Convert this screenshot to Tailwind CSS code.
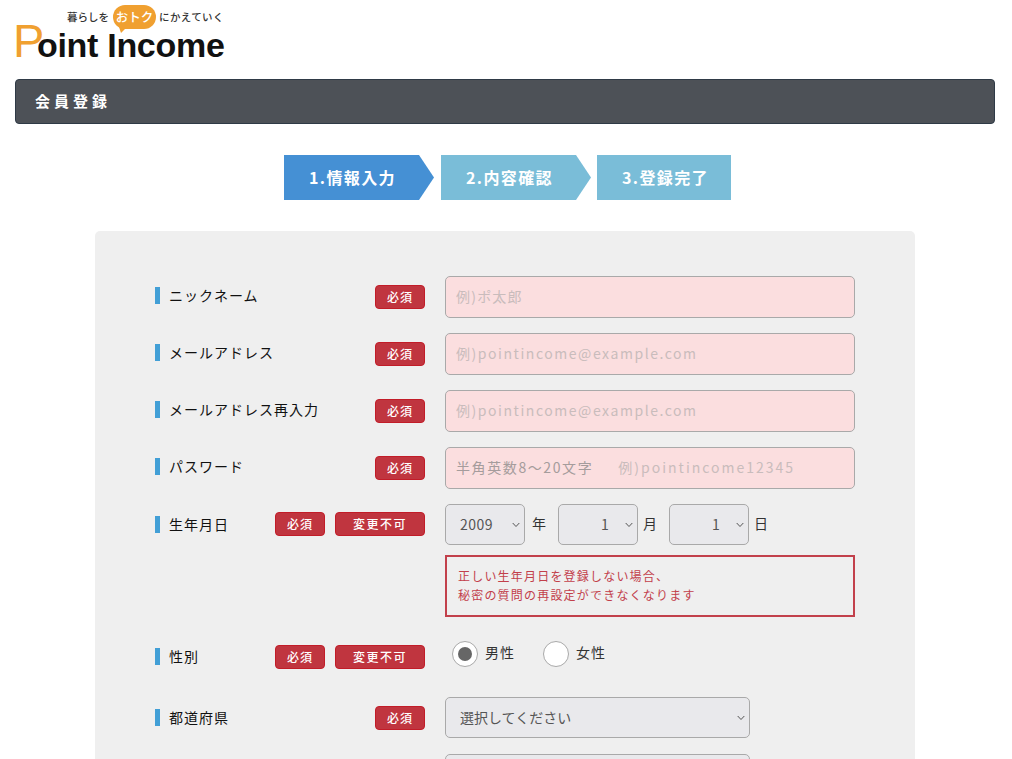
<!DOCTYPE html>
<html lang="ja">
<head>
    <meta charset="UTF-8" />
    <title>会員登録</title>
    <script src="https://cdn.jsdelivr.net/npm/@tailwindcss/browser@4"></script>
</head>

<body class="bg-white h-[759px] overflow-hidden font-['Noto_Sans_CJK_JP','Liberation_Sans',sans-serif] text-[14px] text-[#111]">
    <!-- logo -->
    <div class="h-[79px] pl-[15px] pt-[5px]">
        <div class="w-[212px] whitespace-nowrap">
            <div class="flex items-center h-[24px] pl-[52px] text-[10.5px] font-medium text-[#333] leading-none">
                <span>暮らしを</span>
                <span class="relative ml-[4px] mr-[3px] w-[43px] h-[24px] rounded-full bg-[#f0a030] text-white text-center text-[12.5px] leading-[23px]">おトク<span class="absolute left-[6px] top-[22px] w-0 h-0 border-l-[2px] border-r-[6px] border-t-[6px] border-l-transparent border-r-transparent border-t-[#f0a030]"></span></span>
                <span class="tracking-[0.4px]">にかえていく</span>
            </div>
            <div class="flex items-baseline h-[29px] -mt-[3px] font-['Liberation_Sans'] font-bold text-[34px] leading-[29px] tracking-[-0.3px] text-[#111]">
                <span class="-ml-[2px] w-[24px] text-[#f0a030] font-normal text-[47px]">P</span><span>oint Income</span>
            </div>
        </div>
    </div>

    <!-- title bar -->
    <div class="ml-[15px] mr-[17px] h-[45px] flex items-center pl-[19px] rounded-[4px] bg-[#4d5157] border border-[#2f3a46] text-white text-[15px] font-bold tracking-[4px]">会員登録</div>

    <!-- steps -->
    <div class="flex justify-center mt-[31px] pl-[3px] h-[45px] text-white text-[16px] font-bold tracking-[1.4px]">
        <div class="w-[150px] pr-[13px] pb-[2px] flex items-center justify-center bg-[#4590d4] [clip-path:polygon(0_0,135px_0,150px_50%,135px_100%,0_100%)]">1.情報入力</div>
        <div class="w-[150px] ml-[7px] pr-[13px] pb-[2px] flex items-center justify-center bg-[#7abdd8] [clip-path:polygon(0_0,135px_0,150px_50%,135px_100%,0_100%)]">2.内容確認</div>
        <div class="w-[134px] ml-[6px] pl-[3px] pb-[2px] flex items-center justify-center bg-[#7abdd8]">3.登録完了</div>
    </div>

    <!-- form panel -->
    <div class="ml-[95px] mr-[97px] mt-[31px] pt-[45px] px-[60px] h-[528px] overflow-hidden rounded-t-[5px] bg-[#efefef]">
        <div class="flex flex-col gap-[15px]">
            <div class="flex h-[42px] gap-[20px]">
                <div class="w-[270px] h-[39px] flex items-center">
                    <span class="w-[5px] h-[17px] bg-[#429fd6]"></span>
                    <span class="flex-1 ml-[9px] tracking-[1px]">ニックネーム</span>
                    <span class="w-[50px] h-[24px] mt-[2px] flex items-center justify-center rounded-[4px] bg-[#c0353f] border border-[#c21c28] text-white text-[12px] font-medium tracking-[1px]">必須</span>
                </div>
                <input placeholder="例)ポ太郎" class="w-[410px] h-[42px] px-[10px] pb-[2px] rounded-[5px] bg-[#fbdedf] border border-[#a9a9a9] text-[14px] tracking-[1.2px] placeholder:text-[#c9bcbc]" />
            </div>
            <div class="flex h-[42px] gap-[20px]">
                <div class="w-[270px] h-[39px] flex items-center">
                    <span class="w-[5px] h-[17px] bg-[#429fd6]"></span>
                    <span class="flex-1 ml-[9px] tracking-[1px]">メールアドレス</span>
                    <span class="w-[50px] h-[24px] mt-[2px] flex items-center justify-center rounded-[4px] bg-[#c0353f] border border-[#c21c28] text-white text-[12px] font-medium tracking-[1px]">必須</span>
                </div>
                <input placeholder="例)pointincome@example.com" class="w-[410px] h-[42px] px-[10px] pb-[2px] rounded-[5px] bg-[#fbdedf] border border-[#a9a9a9] text-[14px] tracking-[1.55px] placeholder:text-[#c9bcbc]" />
            </div>
            <div class="flex h-[42px] gap-[20px]">
                <div class="w-[270px] h-[39px] flex items-center">
                    <span class="w-[5px] h-[17px] bg-[#429fd6]"></span>
                    <span class="flex-1 ml-[9px] tracking-[1px]">メールアドレス再入力</span>
                    <span class="w-[50px] h-[24px] mt-[2px] flex items-center justify-center rounded-[4px] bg-[#c0353f] border border-[#c21c28] text-white text-[12px] font-medium tracking-[1px]">必須</span>
                </div>
                <input placeholder="例)pointincome@example.com" class="w-[410px] h-[42px] px-[10px] pb-[2px] rounded-[5px] bg-[#fbdedf] border border-[#a9a9a9] text-[14px] tracking-[1.55px] placeholder:text-[#c9bcbc]" />
            </div>
            <div class="flex h-[42px] gap-[20px]">
                <div class="w-[270px] h-[39px] flex items-center">
                    <span class="w-[5px] h-[17px] bg-[#429fd6]"></span>
                    <span class="flex-1 ml-[9px] tracking-[1px]">パスワード</span>
                    <span class="w-[50px] h-[24px] mt-[2px] flex items-center justify-center rounded-[4px] bg-[#c0353f] border border-[#c21c28] text-white text-[12px] font-medium tracking-[1px]">必須</span>
                </div>
                <div class="w-[410px] h-[42px] px-[10px] pb-[2px] flex items-center rounded-[5px] bg-[#fbdedf] border border-[#a9a9a9] tracking-[1.6px] text-[#a59c9c] whitespace-nowrap">半角英数8～20文字<span class="ml-[25px] tracking-[2px] text-[#c9bcbc]">例)pointincome12345</span></div>
            </div>

            <!-- birthday -->
            <div class="flex gap-[20px]">
                <div class="w-[270px] h-[40px] flex items-center">
                    <span class="w-[5px] h-[17px] bg-[#429fd6]"></span>
                    <span class="flex-1 ml-[9px] tracking-[1px]">生年月日</span>
                    <span class="w-[50px] h-[24px] flex items-center justify-center rounded-[4px] bg-[#c0353f] border border-[#c21c28] text-white text-[12px] font-medium tracking-[1px]">必須</span>
                    <span class="w-[90px] h-[24px] ml-[10px] flex items-center justify-center rounded-[4px] bg-[#c0353f] border border-[#c21c28] text-white text-[12px] font-medium tracking-[1.5px]">変更不可</span>
                </div>
                <div class="w-[410px]">
                    <div class="flex items-center h-[41px]">
                        <div class="relative w-[80px] h-[41px] flex items-center pl-[14px] rounded-[5px] bg-[#e9e9ec] border border-[#a9a9a9] text-[#555] tracking-[0.5px]">2009
                            <svg class="absolute right-[4px] top-[17px]" width="8" height="6" viewBox="0 0 8 6" fill="none" stroke="#555"><path d="M.7 1 4 4.5 7.3 1"/></svg>
                        </div>
                        <span class="ml-[7px] pb-[3px] text-[#333]">年</span>
                        <div class="relative ml-[12px] w-[80px] h-[41px] flex items-center pl-[42px] rounded-[5px] bg-[#e9e9ec] border border-[#a9a9a9] text-[#555]">1
                            <svg class="absolute right-[4px] top-[17px]" width="8" height="6" viewBox="0 0 8 6" fill="none" stroke="#555"><path d="M.7 1 4 4.5 7.3 1"/></svg>
                        </div>
                        <span class="ml-[5px] pb-[3px] text-[#333]">月</span>
                        <div class="relative ml-[12px] w-[80px] h-[41px] flex items-center pl-[42px] rounded-[5px] bg-[#e9e9ec] border border-[#a9a9a9] text-[#555]">1
                            <svg class="absolute right-[4px] top-[17px]" width="8" height="6" viewBox="0 0 8 6" fill="none" stroke="#555"><path d="M.7 1 4 4.5 7.3 1"/></svg>
                        </div>
                        <span class="ml-[5px] pb-[3px] text-[#333]">日</span>
                    </div>
                    <div class="mt-[10px] h-[62px] pl-[11px] pt-[9px] border-2 border-[#c2404b] text-[#c2404b] text-[12px] leading-[19px] tracking-[1.2px]">正しい生年月日を登録しない場合、<br />秘密の質問の再設定ができなくなります</div>
                </div>
            </div>

            <!-- gender -->
            <div class="flex gap-[20px] mt-[4px] h-[46px]">
                <div class="w-[270px] h-[41px] flex items-center">
                    <span class="w-[5px] h-[17px] bg-[#429fd6]"></span>
                    <span class="flex-1 ml-[9px] tracking-[1px]">性別</span>
                    <span class="w-[50px] h-[24px] flex items-center justify-center rounded-[4px] bg-[#c0353f] border border-[#c21c28] text-white text-[12px] font-medium tracking-[1px]">必須</span>
                    <span class="w-[90px] h-[24px] ml-[10px] flex items-center justify-center rounded-[4px] bg-[#c0353f] border border-[#c21c28] text-white text-[12px] font-medium tracking-[1.5px]">変更不可</span>
                </div>
                <div class="w-[410px] flex items-start pl-[7px] tracking-[1px] text-[#333]">
                    <span class="mt-[5px] w-[26px] h-[26px] flex items-center justify-center rounded-full bg-white border border-[#a9a9a9]"><span class="w-[14px] h-[14px] rounded-full bg-[#666]"></span></span>
                    <span class="ml-[7px] mt-[6px]">男性</span>
                    <span class="ml-[28px] mt-[5px] w-[26px] h-[26px] rounded-full bg-white border border-[#a9a9a9]"></span>
                    <span class="ml-[7px] mt-[6px]">女性</span>
                </div>
            </div>

            <!-- prefecture -->
            <div class="flex gap-[20px] h-[41px]">
                <div class="w-[270px] flex items-center">
                    <span class="w-[5px] h-[17px] bg-[#429fd6]"></span>
                    <span class="flex-1 ml-[9px] tracking-[1px]">都道府県</span>
                    <span class="w-[50px] h-[24px] flex items-center justify-center rounded-[4px] bg-[#c0353f] border border-[#c21c28] text-white text-[12px] font-medium tracking-[1px]">必須</span>
                </div>
                <div class="relative w-[305px] h-[41px] flex items-center pl-[14px] rounded-[5px] bg-[#e9e9ec] border border-[#a9a9a9] text-[#555]">選択してください
                    <svg class="absolute right-[4px] top-[17px]" width="8" height="6" viewBox="0 0 8 6" fill="none" stroke="#555"><path d="M.7 1 4 4.5 7.3 1"/></svg>
                </div>
            </div>

            <!-- next row, cut off by the window -->
            <div class="flex gap-[20px] h-[41px] mt-[1px]">
                <div class="w-[270px]"></div>
                <div class="w-[305px] h-[41px] rounded-[5px] bg-[#e9e9ec] border border-[#a9a9a9]"></div>
            </div>
        </div>
    </div>
</body>

</html>
